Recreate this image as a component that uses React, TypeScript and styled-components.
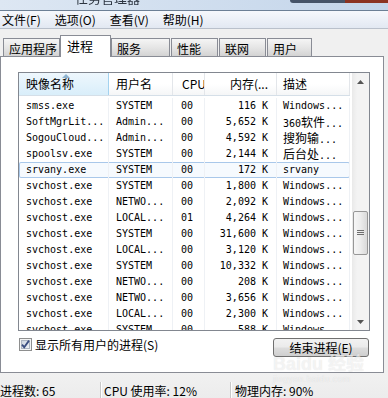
import React from 'react';
import styled, { createGlobalStyle } from 'styled-components';

const UI_FONT = `"Noto Sans CJK SC", "Noto Sans", sans-serif`;
const MONO_FONT = `"DejaVu Sans Mono", "Noto Sans CJK SC", monospace`;

const GlobalStyle = createGlobalStyle`
  html, body {
    margin: 0;
    padding: 0;
    overflow: hidden;
    background: #f0f0f0;
  }
`;

type Column = { w: number; pad: number; right?: boolean };

const columns: Column[] = [
  { w: 90, pad: 7 },
  { w: 64, pad: 7 },
  { w: 32, pad: 8 },
  { w: 72, pad: 8, right: true },
  { w: 73, pad: 6 },
];

const headers = [
  { label: '映像名称', pad: 7, sorted: true },
  { label: '用户名', pad: 7 },
  { label: 'CPU', pad: 9 },
  { label: '内存(...', pad: 8, right: true },
  { label: '描述', pad: 6 },
];

const rows: [string, string, string, string, string][] = [
  ['smss.exe', 'SYSTEM', '00', '116 K', 'Windows...'],
  ['SoftMgrLit...', 'Admin...', '00', '5,652 K', '360软件...'],
  ['SogouCloud...', 'Admin...', '00', '4,592 K', '搜狗输...'],
  ['spoolsv.exe', 'SYSTEM', '00', '2,144 K', '后台处...'],
  ['srvany.exe', 'SYSTEM', '00', '172 K', 'srvany'],
  ['svchost.exe', 'SYSTEM', '00', '1,800 K', 'Windows...'],
  ['svchost.exe', 'NETWO...', '00', '2,092 K', 'Windows...'],
  ['svchost.exe', 'LOCAL...', '01', '4,264 K', 'Windows...'],
  ['svchost.exe', 'SYSTEM', '00', '31,600 K', 'Windows...'],
  ['svchost.exe', 'LOCAL...', '00', '3,120 K', 'Windows...'],
  ['svchost.exe', 'SYSTEM', '00', '10,332 K', 'Windows...'],
  ['svchost.exe', 'NETWO...', '00', '208 K', 'Windows...'],
  ['svchost.exe', 'NETWO...', '00', '3,656 K', 'Windows...'],
  ['svchost.exe', 'LOCAL...', '00', '2,300 K', 'Windows...'],
  ['svchost.exe', 'SYSTEM', '00', '588 K', 'Windows...'],
];

const tabs = [
  { label: '应用程序', w: 57, ml: 3 },
  { label: '进程', w: 51, ml: 0, active: true },
  { label: '服务', w: 59, ml: 0 },
  { label: '性能', w: 47, ml: 1 },
  { label: '联网', w: 47, ml: 1 },
  { label: '用户', w: 45, ml: 1 },
];

const Window = styled.div`
  position: relative;
  width: 388px;
  height: 398px;
  overflow: hidden;
  display: flex;
  flex-direction: column;
  background: #f0f0f0;
  font-family: ${UI_FONT};
  font-size: 12px;
  color: #000;
`;

const TitleBar = styled.div`
  height: 10px;
  flex: none;
  display: flex;
  align-items: flex-start;
  overflow: hidden;
  background: linear-gradient(to right, #dde7f3, #c3d5ea);
  border-bottom: 1px solid #6c7f95;
`;

const TitleText = styled.span`
  margin: -9px 0 0 75px;
  font-size: 13px;
  line-height: 13px;
  color: #2c3440;
  filter: blur(0.6px);
`;

const CaptionButtons = styled.div`
  margin-left: auto;
  display: flex;
  height: 3px;
`;

const Caption = styled.div<{ $w: number; $close?: boolean }>`
  width: ${(p) => p.$w}px;
  background: ${(p) => (p.$close ? '#8b3322' : '#465468')};
  border-bottom-left-radius: ${(p) => (p.$close ? 0 : 3)}px;
`;

const MenuBar = styled.div`
  height: 18px;
  flex: none;
  display: flex;
  align-items: center;
  gap: 14px;
  padding: 1px 0 0 2px;
  box-sizing: border-box;
  background: linear-gradient(#f6f8fc, #e2e8f2);
  border-bottom: 1px solid #b9c0cb;
`;

const MenuItem = styled.span`
  line-height: 16px;
`;

const TabStrip = styled.div`
  height: 27px;
  flex: none;
  display: flex;
  align-items: flex-end;
  position: relative;
  z-index: 1;
`;

const Tab = styled.div<{ $w: number; $ml: number; $active?: boolean }>`
  width: ${(p) => p.$w}px;
  margin-left: ${(p) => p.$ml}px;
  height: ${(p) => (p.$active ? 22 : 18)}px;
  margin-bottom: ${(p) => (p.$active ? -1 : 0)}px;
  box-sizing: border-box;
  border: 1px solid #898c95;
  border-bottom: none;
  padding: ${(p) => (p.$active ? '2px 0 0 6px' : '2px 0 0 5px')};
  line-height: 15px;
  font-size: ${(p) => (p.$active ? 13 : 12)}px;
  background: ${(p) =>
    p.$active ? '#ffffff' : 'linear-gradient(#f5f5f5, #e4e4e4 55%, #d3d3d3)'};
  white-space: nowrap;
`;

const Panel = styled.div`
  width: 384px;
  height: 317px;
  flex: none;
  box-sizing: border-box;
  border: 1px solid #898c95;
  background: #ffffff;
  padding: 15px 0 0 17px;
  display: flex;
  flex-direction: column;
`;

const ListView = styled.div`
  width: 352px;
  height: 259px;
  box-sizing: border-box;
  border: 1px solid #828790;
  display: flex;
  background: #fff;
`;

const ListContent = styled.div`
  width: 331px;
  display: flex;
  flex-direction: column;
  overflow: hidden;
`;

const Header = styled.div`
  height: 22px;
  flex: none;
  display: flex;
  border-bottom: 1px solid #d5dfe8;
  background: linear-gradient(#ffffff, #ffffff 50%, #f5f6f7);
`;

const HeaderCell = styled.div<{ $w: number; $pad: number; $right?: boolean; $sorted?: boolean }>`
  position: relative;
  width: ${(p) => p.$w}px;
  flex: none;
  box-sizing: border-box;
  padding: ${(p) => (p.$right ? `0 ${p.$pad}px 0 0` : `0 0 0 ${p.$pad}px`)};
  text-align: ${(p) => (p.$right ? 'right' : 'left')};
  line-height: 22px;
  white-space: nowrap;
  overflow: hidden;
  border-right: 1px solid ${(p) => (p.$sorted ? '#a3d2ef' : '#e3e6ea')};
  background: ${(p) => (p.$sorted ? 'linear-gradient(#eef7fd, #d9eefa)' : 'transparent')};

  &::before {
    content: '';
    display: ${(p) => (p.$sorted ? 'block' : 'none')};
    position: absolute;
    left: 43px;
    top: 1px;
    border-left: 4px solid transparent;
    border-right: 4px solid transparent;
    border-bottom: 4px solid #8fb3cf;
  }
`;

const Body = styled.div`
  padding-top: 2px;
  display: flex;
  flex-direction: column;
`;

const Row = styled.div<{ $selected?: boolean }>`
  height: 16px;
  flex: none;
  display: flex;
  border-radius: 2px;
  box-shadow: ${(p) => (p.$selected ? 'inset 0 0 0 1px #a9c8ea' : 'none')};
  background: ${(p) => (p.$selected ? '#f6fafe' : 'transparent')};
`;

const Cell = styled.div<{ $w: number; $pad: number; $right?: boolean }>`
  width: ${(p) => p.$w}px;
  flex: none;
  box-sizing: border-box;
  padding: ${(p) => (p.$right ? `0 ${p.$pad}px 0 0` : `0 0 0 ${p.$pad}px`)};
  text-align: ${(p) => (p.$right ? 'right' : 'left')};
  font-family: ${MONO_FONT};
  font-size: 10px;
  line-height: 16px;
  white-space: nowrap;
  overflow: hidden;
  border-right: 1px solid #eef1f5;
`;

const Cjk = styled.span`
  font-family: ${UI_FONT};
  font-size: 12px;
`;

const ScrollBar = styled.div`
  width: 17px;
  margin-left: 2px;
  display: flex;
  flex-direction: column;
  background: linear-gradient(to right, #e9e9e9, #f3f3f3 30%, #f3f3f3);
`;

const ArrowBtn = styled.div`
  height: 17px;
  flex: none;
  display: flex;
  align-items: center;
  justify-content: center;
`;

const Track = styled.div`
  flex: 1;
  display: flex;
  flex-direction: column;
  align-items: center;
`;

const Thumb = styled.div`
  width: 15px;
  height: 44px;
  margin-top: 121px;
  box-sizing: border-box;
  border: 1px solid #979797;
  border-radius: 2px;
  background: linear-gradient(to right, #f6f6f6, #ececec 50%, #d9d9d9);
  display: flex;
  align-items: center;
  justify-content: center;
`;

const OptionsRow = styled.div`
  width: 352px;
  margin-top: 7px;
  display: flex;
  align-items: flex-start;
  justify-content: space-between;
`;

const CheckLabel = styled.label`
  display: flex;
  align-items: flex-start;
  gap: 3px;
  margin-left: 1px;
  line-height: 13px;
  font-size: 12px;
`;

const Button = styled.button`
  width: 96px;
  height: 19px;
  margin-right: 1px;
  box-sizing: border-box;
  border: 1px solid #707070;
  border-radius: 3px;
  padding: 0;
  background: linear-gradient(#f2f2f2 0%, #ebebeb 48%, #dddddd 52%, #cfcfcf 100%);
  font-family: ${UI_FONT};
  font-size: 12px;
  line-height: 17px;
  color: #000;
`;

const StatusBar = styled.div`
  flex: 1;
  display: flex;
  align-items: flex-end;
  padding-top: 8px;
  box-sizing: border-box;
  background: linear-gradient(#f1f1f1, #ececec);
`;

const StatusCell = styled.div<{ $w?: number; $pad: number; $sep?: boolean }>`
  width: ${(p) => (p.$w ? `${p.$w}px` : 'auto')};
  flex: ${(p) => (p.$w ? 'none' : 1)};
  box-sizing: border-box;
  height: 16px;
  padding-left: ${(p) => p.$pad}px;
  border-left: ${(p) => (p.$sep ? '1px solid #c9c9c9' : 'none')};
  box-shadow: ${(p) => (p.$sep ? 'inset 1px 0 0 #ffffff' : 'none')};
  line-height: 18px;
  white-space: nowrap;
`;

const Watermark = styled.div`
  position: absolute;
  left: 273px;
  top: 354px;
  display: flex;
  flex-direction: column;
  pointer-events: none;
  color: rgba(255, 255, 255, 0.6);
  text-shadow: 0 0 1px rgba(0, 0, 0, 0.12);
  font-family: "Liberation Sans", ${UI_FONT};
`;

const WatermarkLogo = styled.span`
  font-size: 18px;
  font-weight: bold;
  line-height: 20px;
`;

const WatermarkUrl = styled.span`
  font-size: 9px;
  line-height: 10px;
  letter-spacing: 0.3px;
`;

const Mixed: React.FC<{ text: string }> = ({ text }) => (
  <>
    {text.split(/([\u4e00-\u9fff]+)/).map((part, i) =>
      i % 2 ? <Cjk key={i}>{part}</Cjk> : part
    )}
  </>
);

const CheckBoxIcon = () => (
  <svg width="13" height="13" viewBox="0 0 13 13">
    <defs>
      <linearGradient id="cbfill" x1="0" y1="0" x2="1" y2="1">
        <stop offset="0" stopColor="#cbd3de" />
        <stop offset="1" stopColor="#f2f4f7" />
      </linearGradient>
    </defs>
    <rect x="0.5" y="0.5" width="12" height="12" fill="#f4f4f4" stroke="#8e8f8f" />
    <rect x="2.5" y="2.5" width="8" height="8" fill="url(#cbfill)" stroke="#aeb6c2" />
    <path d="M3 6.6 L5.2 9.2 L10 2.6" fill="none" stroke="#3b4e80" strokeWidth="1.8" />
  </svg>
);

const Triangle = ({ up }: { up?: boolean }) => (
  <svg width="7" height="4" viewBox="0 0 7 4">
    <path d={up ? 'M0 4 L3.5 0 L7 4 Z' : 'M0 0 L3.5 4 L7 0 Z'} fill="#555" />
  </svg>
);

const Grip = () => (
  <svg width="7" height="6" viewBox="0 0 7 6">
    <path d="M0 0.5 H7 M0 2.5 H7 M0 4.5 H7" stroke="#6e6e6e" strokeWidth="1" />
  </svg>
);

const App: React.FC = () => {
  return (
    <Window>
      <GlobalStyle />
      <TitleBar>
        <TitleText>任务管理器</TitleText>
        <CaptionButtons>
          <Caption $w={55} />
          <Caption $w={43} $close />
        </CaptionButtons>
      </TitleBar>
      <MenuBar>
        <MenuItem>文件(F)</MenuItem>
        <MenuItem>选项(O)</MenuItem>
        <MenuItem>查看(V)</MenuItem>
        <MenuItem>帮助(H)</MenuItem>
      </MenuBar>
      <TabStrip>
        {tabs.map((t) => (
          <Tab key={t.label} $w={t.w} $ml={t.ml} $active={t.active}>
            {t.label}
          </Tab>
        ))}
      </TabStrip>
      <Panel>
        <ListView>
          <ListContent>
            <Header>
              {headers.map((h, i) => (
                <HeaderCell
                  key={h.label}
                  $w={columns[i].w}
                  $pad={h.pad}
                  $right={h.right}
                  $sorted={h.sorted}
                >
                  {h.label}
                </HeaderCell>
              ))}
            </Header>
            <Body>
              {rows.map((r, ri) => (
                <Row key={ri} $selected={r[0] === 'srvany.exe'}>
                  {r.map((v, ci) => (
                    <Cell key={ci} $w={columns[ci].w} $pad={columns[ci].pad} $right={columns[ci].right}>
                      <Mixed text={v} />
                    </Cell>
                  ))}
                </Row>
              ))}
            </Body>
          </ListContent>
          <ScrollBar>
            <ArrowBtn>
              <Triangle up />
            </ArrowBtn>
            <Track>
              <Thumb>
                <Grip />
              </Thumb>
            </Track>
            <ArrowBtn>
              <Triangle />
            </ArrowBtn>
          </ScrollBar>
        </ListView>
        <OptionsRow>
          <CheckLabel>
            <CheckBoxIcon />
            显示所有用户的进程(S)
          </CheckLabel>
          <Button>结束进程(E)</Button>
        </OptionsRow>
      </Panel>
      <StatusBar>
        <StatusCell $w={100} $pad={0}>进程数: 65</StatusCell>
        <StatusCell $w={130} $pad={3} $sep>CPU 使用率: 12%</StatusCell>
        <StatusCell $pad={4} $sep>物理内存: 90%</StatusCell>
      </StatusBar>
      <Watermark>
        <WatermarkLogo>Baidu 经验</WatermarkLogo>
        <WatermarkUrl>jingyan.baidu.com</WatermarkUrl>
      </Watermark>
    </Window>
  );
};

export default App;
